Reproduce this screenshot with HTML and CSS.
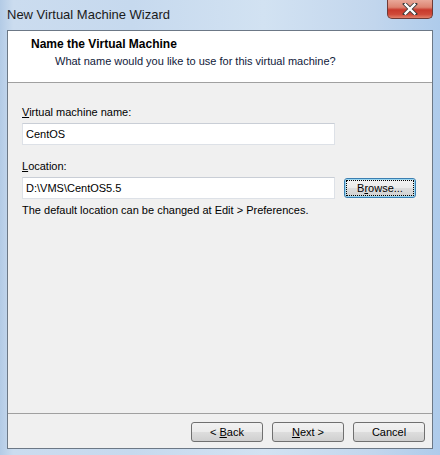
FILE: index.html
```html
<!DOCTYPE html>
<html lang="en">
<head>
    <meta charset="UTF-8">
    <meta name="viewport" content="width=device-width, initial-scale=1.0">
    <title>New Virtual Machine Wizard</title>
    <link rel="stylesheet" href="styles.css">
</head>
<body>
    <div class="window">
        <div class="titleBar">
            <span class="titleText">New Virtual Machine Wizard</span>
            <button class="closeBtn" title="Close">
                <svg width="16" height="12" viewBox="0 0 16 12">
                    <path d="M3 1 L13 11 M13 1 L3 11" stroke="#3a3a3a" stroke-width="4" stroke-linecap="square"/>
                    <path d="M3.5 1.5 L12.5 10.5 M12.5 1.5 L3.5 10.5" stroke="#ffffff" stroke-width="2.4" stroke-linecap="square"/>
                </svg>
            </button>
        </div>
        <div class="client">
            <div class="wizHeader">
                <h2>Name the Virtual Machine</h2>
                <p>What name would you like to use for this virtual machine?</p>
            </div>
            <div class="wizBody">
                <label class="fieldLabel" for="vmName"><u>V</u>irtual machine name:</label>
                <input class="textBox" type="text" id="vmName" value="CentOS">
                <label class="fieldLabel second" for="vmLocation"><u>L</u>ocation:</label>
                <div class="locationRow">
                    <input class="textBox" type="text" id="vmLocation" value="D:\VMS\CentOS5.5">
                    <button class="winBtn focused"><span class="focusRect">B<u>r</u>owse...</span></button>
                </div>
                <p class="hint">The default location can be changed at Edit &gt; Preferences.</p>
            </div>
            <div class="wizFooter">
                <button class="winBtn">&lt; <u>B</u>ack</button>
                <button class="winBtn"><u>N</u>ext &gt;</button>
                <button class="winBtn">Cancel</button>
            </div>
        </div>
    </div>
</body>
</html>
```

FILE: styles.css
```css
* {
    box-sizing: border-box;
}
body {
    margin: 0;
    font-family: "Liberation Sans", Arial, sans-serif;
    font-size: 11px;
    color: #000;
}
.window {
    width: 440px;
    height: 455px;
    display: flex;
    flex-direction: column;
    padding: 0 7px 6px 7px;
    background: linear-gradient(90deg, #b3cbe6 0%, #cbdcef 3%, #c6d9ee 30%, #d2e2f2 60%, #c2d6ed 85%, #aecbeb 100%);
}
.titleBar {
    height: 30px;
    display: flex;
    justify-content: space-between;
    align-items: flex-start;
}
.titleText {
    font-size: 13px;
    line-height: 18px;
    padding-top: 6px;
    color: #1a1a1a;
}
.closeBtn {
    width: 46px;
    height: 19px;
    border: 1px solid #6e3a36;
    border-top: none;
    border-radius: 0 0 5px 5px;
    background: linear-gradient(180deg, #e9a899 0%, #dd8472 40%, #c8392c 55%, #cf4a39 80%, #e2806a 100%);
    display: flex;
    align-items: center;
    justify-content: center;
    padding: 0;
}
.client {
    flex: 1;
    display: flex;
    flex-direction: column;
    border: 1px solid #6c7886;
    background: #f0f0f0;
}
.wizHeader {
    height: 52px;
    background: #fff;
    border-bottom: 1px solid #a0a0a0;
    padding-top: 5px;
}
.wizHeader h2 {
    margin: 0;
    padding-left: 23px;
    font-size: 12px;
    line-height: 16px;
    font-weight: bold;
}
.wizHeader p {
    margin: 1px 0 0 0;
    padding-left: 47px;
    line-height: 16px;
    color: #10203a;
}
.wizBody {
    flex: 1;
    padding: 22px 14px 0 14px;
    display: flex;
    flex-direction: column;
    align-items: flex-start;
}
.fieldLabel {
    line-height: 15px;
    margin-bottom: 3px;
}
.fieldLabel.second {
    margin-top: 14px;
}
.textBox {
    width: 313px;
    height: 22px;
    border: 1px solid #dde1e7;
    border-top-color: #c9ced6;
    background: #fff;
    font: inherit;
    padding: 0 3px;
    outline: none;
}
.locationRow {
    display: flex;
    align-items: center;
    gap: 9px;
}
.hint {
    margin: 4px 0 0 0;
    line-height: 15px;
}
.winBtn {
    width: 72px;
    height: 20px;
    border: 1px solid #707070;
    border-radius: 3px;
    background: linear-gradient(180deg, #f2f2f2 0%, #ebebeb 48%, #dddddd 52%, #cfcfcf 100%);
    font: inherit;
    color: #000;
    padding: 0;
    line-height: 16px;
}
.winBtn.focused {
    border-color: #3c7fb1;
    box-shadow: inset 0 0 0 1px #9ad7f2;
    padding: 1px;
}
.focusRect {
    display: block;
    height: 16px;
    border: 1px dotted #000;
    line-height: 14px;
}
.wizFooter {
    height: 35px;
    border-top: 1px solid #a0a0a0;
    padding: 8px 7px 6px 0;
    display: flex;
    justify-content: flex-end;
    gap: 9px;
}
```
